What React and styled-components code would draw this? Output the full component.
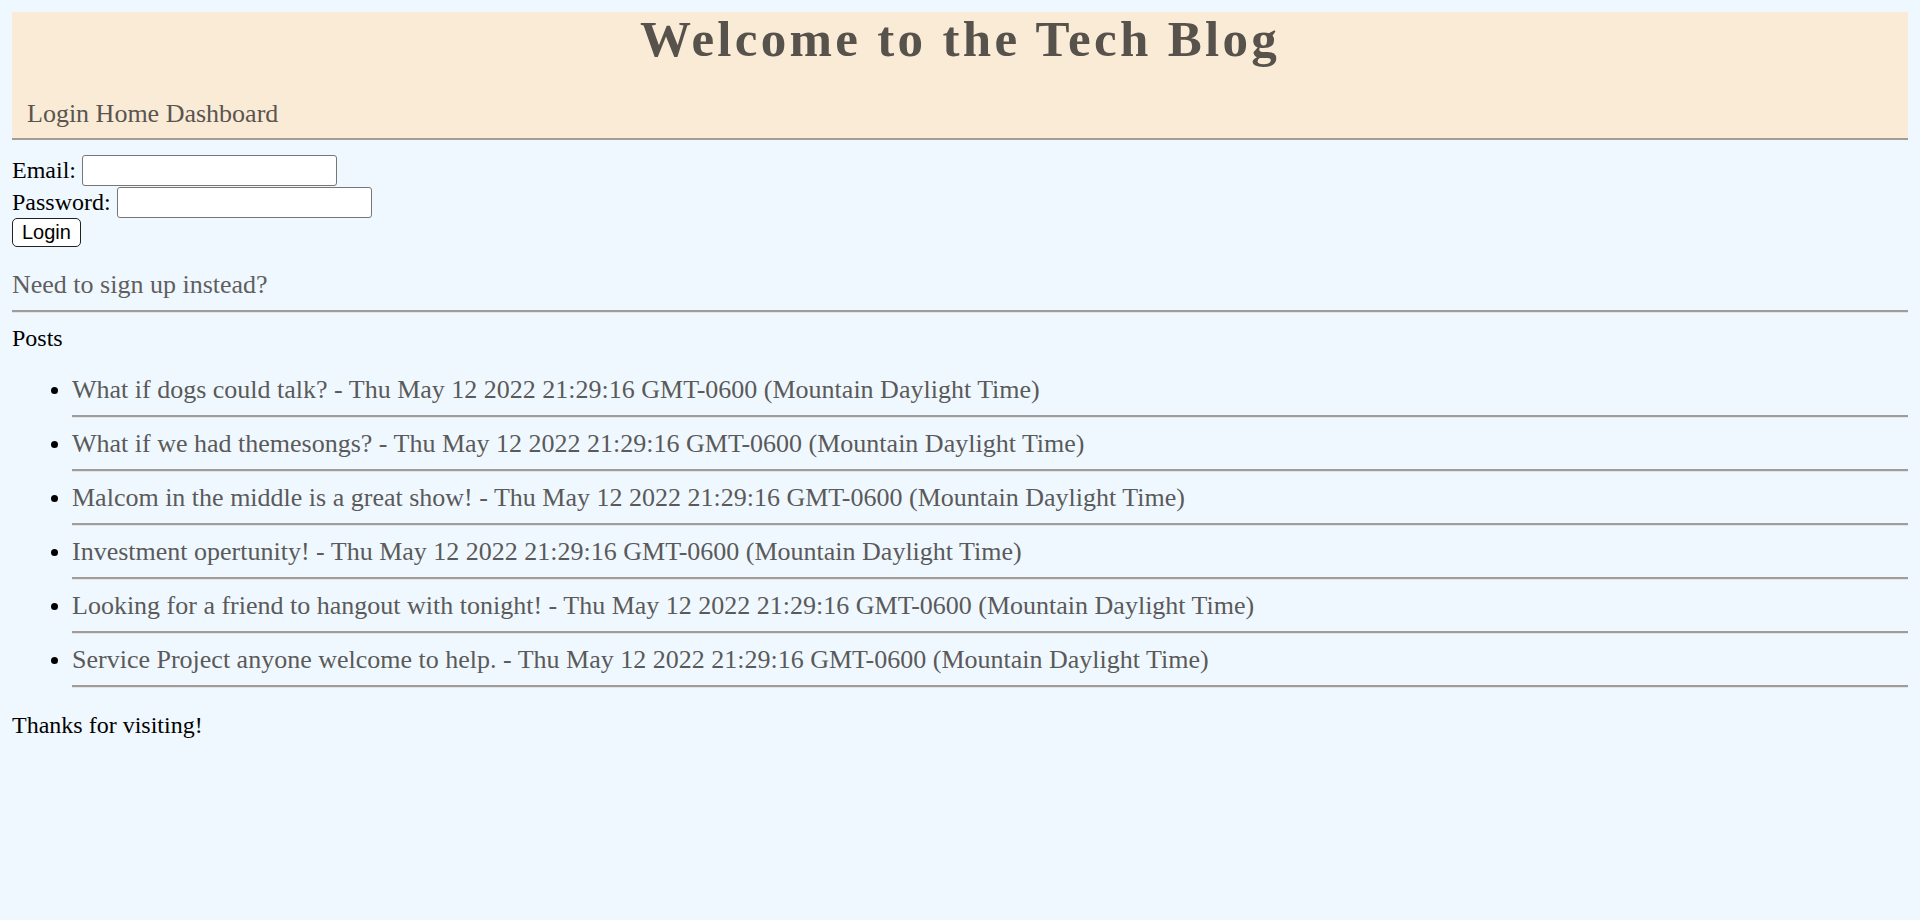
import styled, { createGlobalStyle } from "styled-components";

const GlobalStyle = createGlobalStyle`
  body {
    margin: 12px;
    background-color: #f0f8ff;
    font-family: "Liberation Serif", "Times New Roman", serif;
    font-size: 24px;
    color: #000;
  }
`;

const posts = [
  "What if dogs could talk?",
  "What if we had themesongs?",
  "Malcom in the middle is a great show!",
  "Investment opertunity!",
  "Looking for a friend to hangout with tonight!",
  "Service Project anyone welcome to help.",
];

const stamp = "Thu May 12 2022 21:29:16 GMT-0600 (Mountain Daylight Time)";

const App = () => {
  return (
    <>
      <GlobalStyle />
      <Header>
        <Title>Welcome to the Tech Blog</Title>
        <Nav>
          <NavLink href="#">Login</NavLink> <NavLink href="#">Home</NavLink>{" "}
          <NavLink href="#">Dashboard</NavLink>
        </Nav>
      </Header>

      <LoginForm onSubmit={(e) => e.preventDefault()}>
        <Row>
          <Label htmlFor="email">Email:</Label>
          <Input id="email" type="text" />
        </Row>
        <Row>
          <Label htmlFor="password">Password:</Label>
          <Input id="password" type="password" />
        </Row>
        <Button type="submit">Login</Button>
      </LoginForm>

      <SignUp href="#">Need to sign up instead?</SignUp>
      <Rule />

      <Heading>Posts</Heading>
      <PostList>
        {posts.map((title) => (
          <li key={title}>
            <PostLink href="#">
              {title} - {stamp}
            </PostLink>
            <Rule />
          </li>
        ))}
      </PostList>

      <Footer>Thanks for visiting!</Footer>
    </>
  );
};
export default App;

const Header = styled.header`
  background-color: #faebd7;
  border-bottom: 2px solid #a39d95;
  padding: 0 15px 11px;
`;

const Title = styled.h1`
  margin: 0 0 33px;
  text-align: center;
  font-size: 51px;
  line-height: 55px;
  letter-spacing: 3.3px;
  font-weight: bold;
  color: #57534c;
`;

const Nav = styled.nav`
  font-size: 26px;
  line-height: 27px;
`;

const NavLink = styled.a`
  color: #5a554f;
  text-decoration: none;
`;

const LoginForm = styled.form`
  margin-top: 14px;
`;

const Row = styled.div`
  display: flex;
  align-items: center;
  gap: 6px;
  height: 32px;
`;

const Label = styled.label`
  font-size: 24px;
`;

const Input = styled.input`
  box-sizing: border-box;
  width: 255px;
  height: 31px;
  border: 1.5px solid #767676;
  border-radius: 3px;
  background: #fff;
  padding: 1px 3px;
  font-size: 20px;
`;

const Button = styled.button`
  box-sizing: border-box;
  height: 29px;
  padding: 0 9px;
  border: 1.5px solid #222;
  border-radius: 5px;
  background: #fff;
  font-family: "Liberation Sans", Arial, sans-serif;
  font-size: 20px;
  color: #000;
`;

const SignUp = styled.a`
  display: block;
  margin-top: 24px;
  font-size: 26px;
  line-height: 27px;
  color: #5f5f5f;
  text-decoration: none;
`;

const Rule = styled.hr`
  margin: 12px 0;
  height: 0;
  border: none;
  border-top: 2px solid #9d9d9d;
  border-bottom: 1px solid #e4e4e4;
`;

const Heading = styled.div`
  line-height: 27px;
`;

const PostList = styled.ul`
  margin: 24px 0;
  padding-left: 60px;
`;

const PostLink = styled.a`
  display: block;
  font-size: 26px;
  line-height: 27px;
  color: #5a5a5a;
  text-decoration: none;
`;

const Footer = styled.p`
  margin: 24px 0;
`;
